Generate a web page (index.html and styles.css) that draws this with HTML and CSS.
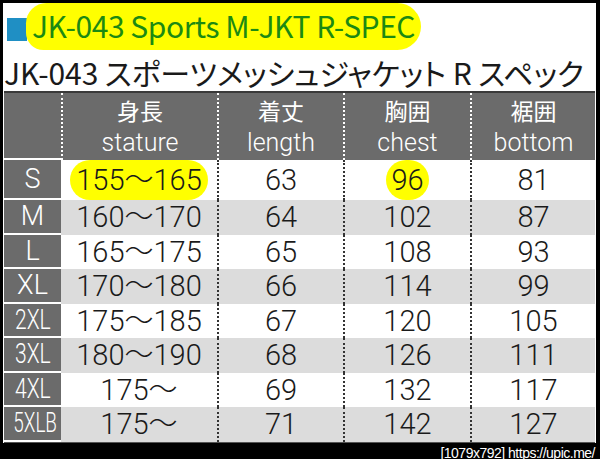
FILE: index.html
```html
<!DOCTYPE html>
<html lang="ja">
  <head>
    <meta charset="UTF-8" />
    <meta name="viewport" content="width=device-width, initial-scale=1.0" />
    <title>JK-043 Sports M-JKT R-SPEC</title>
    <link rel="stylesheet" href="styles.css">
  </head>

  <body>
    <div class="sheet">
      <div class="title">
        <span class="mark"></span>
        <h1 class="titlePill">JK-043 Sports M-JKT R-SPEC</h1>
      </div>
      <p class="subtitle">JK-043 スポーツメッシュジャケット R スペック</p>

      <table class="spec">
        <colgroup>
          <col class="wSize" />
          <col class="wStature" />
          <col class="wLength" />
          <col class="wChest" />
          <col class="wBottom" />
        </colgroup>
        <tr class="head">
          <th class="size"></th>
          <th>身長<br /><span class="en">stature</span></th>
          <th>着丈<br /><span class="en">length</span></th>
          <th>胸囲<br /><span class="en">chest</span></th>
          <th>裾囲<br /><span class="en">bottom</span></th>
        </tr>
        <tr>
          <td class="size">S</td>
          <td class="first"><span class="mark1 wide">155〜165</span></td>
          <td>63</td>
          <td><span class="mark1">96</span></td>
          <td>81</td>
        </tr>
        <tr class="alt">
          <td class="size">M</td>
          <td class="first">160〜170</td>
          <td>64</td>
          <td>102</td>
          <td>87</td>
        </tr>
        <tr>
          <td class="size">L</td>
          <td class="first">165〜175</td>
          <td>65</td>
          <td>108</td>
          <td>93</td>
        </tr>
        <tr class="alt">
          <td class="size">XL</td>
          <td class="first">170〜180</td>
          <td>66</td>
          <td>114</td>
          <td>99</td>
        </tr>
        <tr>
          <td class="size"><span class="narrow">2XL</span></td>
          <td class="first">175〜185</td>
          <td>67</td>
          <td>120</td>
          <td>105</td>
        </tr>
        <tr class="alt">
          <td class="size"><span class="narrow">3XL</span></td>
          <td class="first">180〜190</td>
          <td>68</td>
          <td>126</td>
          <td>111</td>
        </tr>
        <tr>
          <td class="size"><span class="narrow">4XL</span></td>
          <td class="first">175〜</td>
          <td>69</td>
          <td>132</td>
          <td>117</td>
        </tr>
        <tr class="alt">
          <td class="size"><span class="narrower">5XLB</span></td>
          <td class="first">175〜</td>
          <td>71</td>
          <td>142</td>
          <td>127</td>
        </tr>
      </table>
    </div>
    <div class="credit">[1079x792] https://upic.me/</div>
  </body>
</html>
```

FILE: styles.css
```css
body {
  margin: 0;
  padding-top: 3px;
  background: #000;
}

.sheet {
  width: 593px;
  margin-left: 3px;
  background: #fff;
}

.title {
  display: flex;
  align-items: flex-start;
  height: 47px;
}
.mark {
  width: 20px;
  height: 23px;
  margin: 15px 0 0 4px;
  background: #1f8fc4;
}
.titlePill {
  margin: 0 0 0 -1px;
  padding: 0 6px 0 6px;
  height: 47px;
  line-height: 47px;
  background: #ffff00;
  border-radius: 26px 30px 30px 22px;
  color: #1c8a12;
  font: normal 30px "Noto Sans CJK JP", sans-serif;
  letter-spacing: -0.45px;
}

.subtitle {
  margin: 0;
  padding-left: 1px;
  height: 41px;
  line-height: 40px;
  color: #1a1a1a;
  font: 30px "Noto Sans CJK JP", sans-serif;
  font-feature-settings: "palt";
  letter-spacing: -0.1px;
}

.spec {
  width: 591px;
  margin-left: 1px;
  table-layout: fixed;
  border-collapse: separate;
  border-spacing: 0;
  border-top: 2px solid #3a3a3a;
  border-bottom: 1px solid #555;
  font-family: Roboto, "Noto Sans CJK JP", sans-serif;
}
.wSize {
  width: 57px;
}
.wStature {
  width: 156px;
}
.wLength {
  width: 126px;
}
.wChest {
  width: 127px;
}
.wBottom {
  width: 125px;
}

.head th {
  height: 67px;
  padding: 0;
  background: #6b6b6b;
  color: #fff;
  font-weight: normal;
  font-size: 23px;
  line-height: 31px;
  border-left: 2px dotted #fff;
  font-family: "Noto Sans CJK JP", sans-serif;
}
.head th.size {
  border-left: none;
  border-bottom: 2px solid #fff;
  height: 65px;
}
.head .en {
  font-family: Roboto, sans-serif;
  font-weight: 300;
  font-size: 25px;
}

td {
  height: 34.5px;
  padding: 0;
  text-align: center;
  color: #1a1a1a;
  font-size: 29px;
  font-weight: 300;
  line-height: 30px;
  border-left: 2px dotted #333;
}
td.first {
  border-left: none;
}
td.size {
  border-left: none;
  border-bottom: 2px solid #fff;
  background: #6b6b6b;
  color: #fff;
  font-size: 27px;
  font-weight: 300;
  height: 32.5px;
}
.alt td {
  background: #dcdcdc;
}
.alt td.size {
  background: #6b6b6b;
}

.narrow {
  display: inline-block;
  transform: scaleX(0.78);
}
.narrower {
  display: inline-block;
  transform: scaleX(0.7);
}

.mark1 {
  display: inline-block;
  height: 40px;
  line-height: 40px;
  padding: 0 5px;
  background: #ffff00;
  border-radius: 20px;
}
.mark1.wide {
  padding: 0 6px;
}

.credit {
  padding: 2px 5px 0 0;
  text-align: right;
  color: #fff;
  font: 14px/16px "Liberation Sans", sans-serif;
  letter-spacing: -0.5px;
}
```
